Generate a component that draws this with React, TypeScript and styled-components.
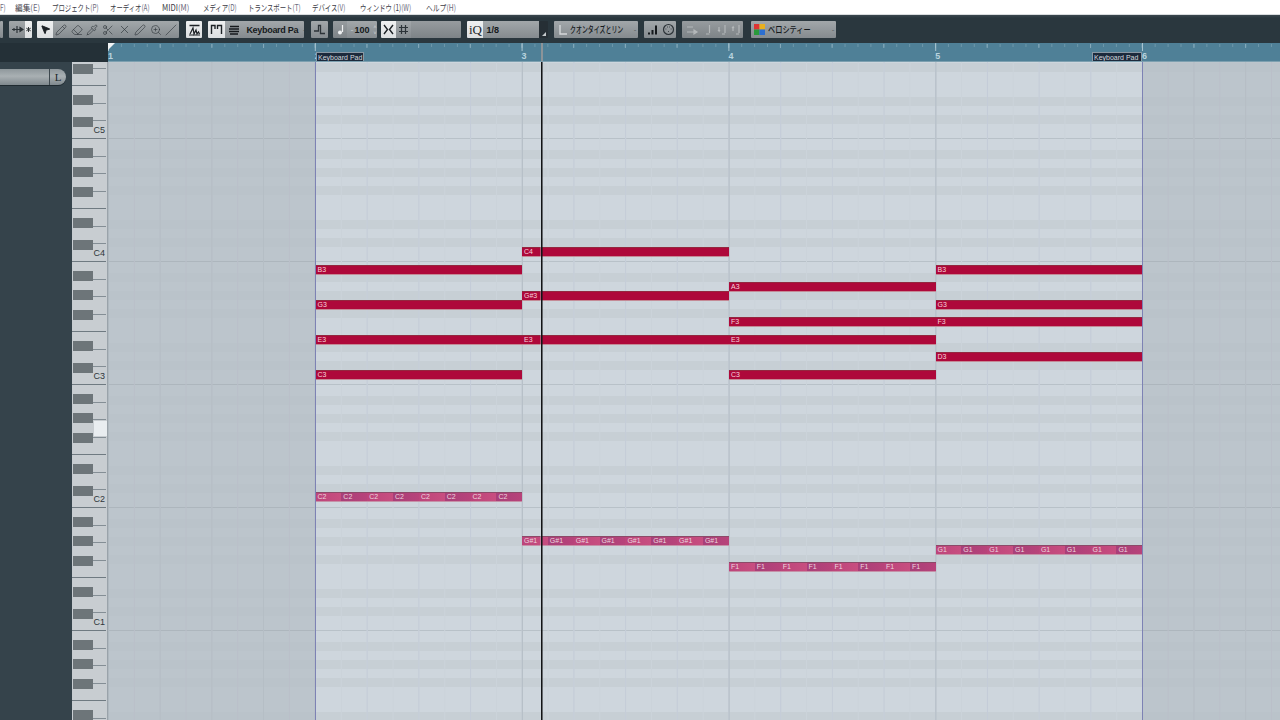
import styled, { createGlobalStyle, css } from "styled-components";
import { Eraser, Pipette, Pencil, Scissors, X, Slash, ZoomIn, Pen, MousePointer2 } from "lucide-react";

const BAR = 206.8;
const LANE_TOP = 62;
const OCTAVE = 123;

const GlobalStyle = createGlobalStyle`
  html, body {
    margin: 0;
    padding: 0;
    background: #35434b;
  }
  * {
    box-sizing: border-box;
  }
  svg {
    flex: none;
  }
`;

const Screen = styled.div`
  width: 1280px;
  height: 720px;
  overflow: hidden;
  display: flex;
  flex-direction: column;
  font-family: "Liberation Sans", Arial, sans-serif;
`;

const MenuBar = styled.div`
  height: 15px;
  flex: none;
  background: #fff;
  border-bottom: 1px solid #d9dcde;
  display: flex;
  gap: 10px;
  overflow: hidden;
  font-family: "Noto Sans CJK JP", "Liberation Sans", sans-serif;
  font-size: 8.5px;
  line-height: 14px;
  color: #3c3c46;
  white-space: nowrap;
`;

const MenuItem = styled.span<{ $w: number; $sx: number }>`
  flex: none;
  width: ${(p) => p.$w}px;
  transform: scaleX(${(p) => p.$sx});
  transform-origin: left center;
  b {
    font-weight: 400;
    color: #6c6a7c;
  }
`;

const Toolbar = styled.div`
  height: 28px;
  flex: none;
  background: linear-gradient(#3a474e, #2a373e 3px);
  display: flex;
  align-items: flex-start;
  padding-top: 6px;
`;

const Group = styled.div<{ $gap?: number }>`
  display: flex;
  height: 17px;
  flex: none;
  margin-right: ${(p) => p.$gap ?? 5}px;
  border-radius: 1px;
  overflow: hidden;
`;

const Seg = styled.div<{ $w: number; $on?: boolean; $off?: boolean }>`
  flex: none;
  width: ${(p) => p.$w}px;
  height: 17px;
  display: flex;
  align-items: center;
  justify-content: center;
  color: #2c3338;
  background: linear-gradient(#a2a7aa, #858b8f);
  ${(p) =>
    p.$on &&
    css`
      background: linear-gradient(#eff0f1, #dcdfe1);
      color: #1d2226;
    `}
  ${(p) =>
    p.$off &&
    css`
      background: linear-gradient(#979c9f, #7d8387);
      color: #b4b8ba;
    `}
`;

const SegText = styled.div<{ $w: number; $gap?: number }>`
  flex: none;
  width: ${(p) => p.$w}px;
  height: 17px;
  display: flex;
  align-items: center;
  gap: ${(p) => p.$gap ?? 3}px;
  padding-left: 3px;
  overflow: hidden;
  white-space: nowrap;
  color: #15191c;
  font-size: 9px;
  font-weight: 700;
  background: linear-gradient(#a2a7aa, #858b8f);
`;

const Jp = styled.span<{ $w: number; $sx: number }>`
  flex: none;
  width: ${(p) => p.$w}px;
  font-family: "Noto Sans CJK JP", sans-serif;
  font-size: 9px;
  font-weight: 500;
  transform: scaleX(${(p) => p.$sx});
  transform-origin: left center;
`;

const Narrow = styled.span`
  letter-spacing: -0.3px;
`;

const Drop = styled.span`
  margin-left: auto;
  margin-right: 2px;
  color: #555c60;
  font-size: 8px;
  font-weight: 400;
`;

const Spin = styled.span`
  margin-left: auto;
  margin-right: 1px;
  font-size: 5px;
  line-height: 6px;
  font-weight: 400;
  color: #d8dbdd;
  text-align: center;
`;

const Minus = styled.span`
  color: #c4c8ca;
  font-weight: 400;
  margin-right: -2px;
`;

const IqLogo = styled.span`
  font-family: "Liberation Serif", serif;
  font-size: 13px;
  font-weight: 400;
  color: #22272b;
`;

const Corner = styled.div`
  flex: none;
  width: 9px;
  height: 17px;
  background: #262f35;
  position: relative;
  &::after {
    content: "";
    position: absolute;
    right: 2px;
    bottom: 2px;
    border-left: 4px solid transparent;
    border-bottom: 4px solid #c4c9cc;
  }
`;

const Ruler = styled.div`
  height: 19px;
  flex: none;
  display: flex;
  background: #243037;
`;

const RulerCorner = styled.div`
  flex: none;
  width: 108px;
`;

const RulerTrack = styled.div`
  flex: 1;
  position: relative;
  display: flex;
  overflow: hidden;
  border-bottom: 1px solid #7da0b0;
  background-color: #4f8097;
  background-image: linear-gradient(90deg, #a9c5d1 1px, transparent 1px),
    linear-gradient(90deg, #86aabb 1px, transparent 1px),
    linear-gradient(90deg, #6d97aa 1px, transparent 1px);
  background-size: ${BAR}px 8px, ${BAR / 4}px 4px, ${BAR / 16}px 3px;
  background-position: 0 0, 0 1px, 0 1px;
  background-repeat: repeat-x;
`;

const StartFlag = styled.div`
  position: absolute;
  left: 0;
  top: 0;
  border-top: 7px solid #f1f4f5;
  border-right: 7px solid transparent;
`;

const BarCell = styled.div`
  flex: none;
  width: ${BAR}px;
  padding: 8px 0 0 0;
  font-size: 9px;
  line-height: 10px;
  font-weight: 700;
  color: #b9d3de;
`;

const PartTag = styled.div<{ $x: number; $w: number }>`
  position: absolute;
  left: ${(p) => p.$x}px;
  width: ${(p) => p.$w}px;
  top: 9px;
  height: 10px;
  padding-left: 1px;
  background: #1c2a3c;
  border: 1px solid #8a99a5;
  border-bottom: none;
  color: #d2d8dc;
  font-size: 7px;
  line-height: 9px;
  white-space: nowrap;
`;

const RulerHead = styled.div`
  position: absolute;
  left: 433px;
  top: 0;
  bottom: 0;
  width: 2px;
  background: #8c9499;
`;

const Body = styled.div`
  flex: 1;
  display: flex;
  min-height: 0;
`;

const LeftPanel = styled.div`
  flex: none;
  width: 72px;
  background: #35434b;
  padding-top: 7px;
`;

const Pill = styled.div`
  width: 66px;
  height: 16px;
  display: flex;
  border-radius: 0 8px 8px 0;
  overflow: hidden;
  background: linear-gradient(#8f989c, #a9b0b3 45%, #7f888d);
  box-shadow: 0 1px 0 #1f2a30;
`;

const PillBody = styled.div`
  flex: 1;
  border-right: 1px solid #3d484e;
`;

const PillTag = styled.div`
  flex: none;
  width: 16px;
  text-align: center;
  font-family: "Liberation Serif", serif;
  font-size: 11px;
  line-height: 16px;
  color: #20282c;
`;

const Keyboard = styled.div`
  flex: none;
  width: 36px;
  position: relative;
  overflow: hidden;
  background: #c8cdd1;
  border-right: 1px solid #9aa3aa;
`;

const BlackKey = styled.div<{ $y: number }>`
  position: absolute;
  left: 1px;
  top: ${(p) => p.$y}px;
  width: 20px;
  height: 10px;
  background: #6d7579;
`;

const KeyLine = styled.div<{ $y: number; $full: boolean }>`
  position: absolute;
  right: 1px;
  top: ${(p) => p.$y}px;
  width: ${(p) => (p.$full ? 34 : 14)}px;
  height: 1px;
  background: ${(p) => (p.$full ? "#6f7a81" : "#848e95")};
`;

const KeyLabel = styled.div<{ $y: number }>`
  position: absolute;
  right: 2px;
  top: ${(p) => p.$y}px;
  font-size: 9px;
  line-height: 10px;
  color: #30363a;
`;

const ActiveKey = styled.div`
  position: absolute;
  left: 22px;
  top: ${421 - LANE_TOP}px;
  width: 13px;
  height: 15px;
  background: #e9edf0;
`;

const laneBackground = (base: string, stripe: string, line: string, bar: string, quarter: string, eighth: string) => css`
  background-color: ${base};
  background-image: linear-gradient(90deg, ${bar} 1px, transparent 1px),
    linear-gradient(90deg, ${quarter} 1px, transparent 1px),
    linear-gradient(90deg, ${eighth} 1px, transparent 1px),
    linear-gradient(
      ${line} 0 1px,
      transparent 1px 12px,
      ${stripe} 12px 21px,
      transparent 21px 30px,
      ${stripe} 30px 39px,
      transparent 39px 48px,
      ${stripe} 48px 57px,
      transparent 57px 82px,
      ${stripe} 82px 91px,
      transparent 91px 100px,
      ${stripe} 100px 109px,
      transparent 109px
    );
  background-size: ${BAR}px 100%, ${BAR / 4}px 100%, ${BAR / 8}px 100%, 100% ${OCTAVE}px;
`;

const Lane = styled.div`
  flex: 1;
  position: relative;
  overflow: hidden;
  ${laneBackground("#bcc5cc", "#bac3ca", "#adb6bd", "#afb8bf", "#b5bec5", "#babfc9")}
  background-position: 0 0, 0 0, 0 0, 0 ${261 - LANE_TOP}px;
`;

const PartRegion = styled.div`
  position: absolute;
  left: 207px;
  top: 0;
  bottom: 0;
  width: 827.5px;
  border-left: 1px solid #7d82b4;
  border-right: 1px solid #7d82b4;
  ${laneBackground("#ced6dd", "#c7cfd5", "#b8c1c8", "#b3bcc4", "#c4ccd8", "#cbd3da")}
  background-position: -1px 0, -1px 0, -1px 0, 0 ${261 - LANE_TOP}px;
`;

const Note = styled.div<{ $x: number; $y: number; $w: number }>`
  position: absolute;
  left: ${(p) => p.$x - 108}px;
  top: ${(p) => p.$y - LANE_TOP}px;
  width: ${(p) => p.$w}px;
  height: 10px;
  padding-left: 2px;
  font-size: 7px;
  line-height: 7px;
  white-space: nowrap;
  color: #f6d3da;
  background: #ae083a;
  border-top: 1px solid #93283f;
  border-bottom: 1px solid #c48a96;
`;

const SoftNote = styled.div<{ $x: number; $y: number }>`
  position: absolute;
  left: ${(p) => p.$x - 108}px;
  top: ${(p) => p.$y - LANE_TOP}px;
  width: ${BAR}px;
  height: 10px;
  display: flex;
  border-top: 1px solid #8c4a68;
  border-bottom: 1px solid #c592a8;
`;

const SoftCell = styled.div<{ $odd: boolean }>`
  flex: none;
  width: ${BAR / 8}px;
  padding-left: 2px;
  font-size: 7px;
  line-height: 7px;
  color: #ecd6df;
  background: ${(p) => (p.$odd ? "linear-gradient(90deg, #a83f78, #b8437a)" : "linear-gradient(90deg, #bc447a, #c84e80)")};
`;

const Playhead = styled.div`
  position: absolute;
  left: 433px;
  top: 0;
  bottom: 0;
  width: 1px;
  background: #121416;
  box-shadow: 1px 0 0 rgba(18, 20, 22, 0.55), -1px 0 0 rgba(210, 215, 220, 0.35);
`;

const redNotes = [
  { n: "C4", x: 522, y: 247 },
  { n: "B3", x: 315.5, y: 265 },
  { n: "B3", x: 935.5, y: 265 },
  { n: "A3", x: 729, y: 282 },
  { n: "G#3", x: 522, y: 291 },
  { n: "G3", x: 315.5, y: 300 },
  { n: "G3", x: 935.5, y: 300 },
  { n: "F3", x: 729, y: 317 },
  { n: "F3", x: 935.5, y: 317 },
  { n: "E3", x: 315.5, y: 335 },
  { n: "E3", x: 522, y: 335 },
  { n: "E3", x: 729, y: 335 },
  { n: "D3", x: 935.5, y: 352 },
  { n: "C3", x: 315.5, y: 370 },
  { n: "C3", x: 729, y: 370 },
];

const softNotes = [
  { n: "C2", x: 315.5, y: 492 },
  { n: "G#1", x: 522, y: 536 },
  { n: "G1", x: 935.5, y: 545 },
  { n: "F1", x: 729, y: 562 },
];

// the first menu runs off the left edge of the picture, only its tail shows
const menus = [
  ["", "F)", 5, 0.75],
  ["編集", "(E)", 27, 0.9],
  ["プロジェクト", "(P)", 48, 0.75],
  ["オーディオ", "(A)", 42, 0.75],
  ["MIDI", "(M)", 31, 0.9],
  ["メディア", "(D)", 35, 0.75],
  ["トランスポート", "(T)", 54, 0.75],
  ["デバイス", "(V)", 38, 0.75],
  ["ウィンドウ (1)", "(W)", 56, 0.75],
  ["ヘルプ", "(H)", 33, 0.8],
] as const;

const octaves = [15, 138, 261, 384, 507, 630];
const labels: Record<number, string> = { 138: "C5", 261: "C4", 384: "C3", 507: "C2", 630: "C1" };
const blackOffsets = [10, 29, 49, 80, 102];
const lineOffsets = [0, 17.5, 35, 52.5, 70, 87.5, 105];

function Glyph({ children, w = 13, h = 13 }: { children: React.ReactNode; w?: number; h?: number }) {
  return (
    <svg width={w} height={h} viewBox={`0 0 ${w} ${h}`} fill="none" stroke="currentColor" strokeWidth="1.2">
      {children}
    </svg>
  );
}

function Piano() {
  return (
    <Keyboard>
      {octaves.map((base) => (
        <div key={base}>
          {lineOffsets.map((o) => (
            <KeyLine key={o} $y={Math.round(base + o - LANE_TOP)} $full={o === 0 || o === 70} />
          ))}
          {blackOffsets.map((o) => (
            <BlackKey key={o} $y={base + o - LANE_TOP} />
          ))}
          {labels[base] && <KeyLabel $y={base - LANE_TOP - 13}>{labels[base]}</KeyLabel>}
        </div>
      ))}
      <ActiveKey />
    </Keyboard>
  );
}

function App() {
  const tool = { size: 12, strokeWidth: 1.2 };
  return (
    <Screen>
      <GlobalStyle />
      <MenuBar>
        {menus.map(([label, key, w, sx]) => (
          <MenuItem key={key} $w={w} $sx={sx}>
            {label}
            <b>{key}</b>
          </MenuItem>
        ))}
      </MenuBar>

      <Toolbar>
        <Group $gap={6}>
          <Seg $w={3} />
        </Group>
        <Group>
          <Seg $w={16}>
            <Glyph>
              <path d="M1 6.5h11" />
              <path d="M6 3v7M3 5v3M9 4.5l3 2-3 2z" fill="currentColor" />
            </Glyph>
          </Seg>
          <Seg $w={7} $on>
            <Glyph w={5} h={5}>
              <path d="M2.5 0v5M.3 1.2l4.4 2.6M4.7 1.2L.3 3.8" strokeWidth="0.9" />
            </Glyph>
          </Seg>
        </Group>
        <Group $gap={7}>
          <Seg $w={16} $on>
            <MousePointer2 size={11} fill="currentColor" />
          </Seg>
          <Seg $w={15.8}>
            <Pencil {...tool} />
          </Seg>
          <Seg $w={15.8}>
            <Eraser {...tool} />
          </Seg>
          <Seg $w={15.8}>
            <Pipette {...tool} />
          </Seg>
          <Seg $w={15.8}>
            <Scissors {...tool} />
          </Seg>
          <Seg $w={15.8}>
            <X size={13} strokeWidth={1.2} />
          </Seg>
          <Seg $w={15.8}>
            <Pen {...tool} />
          </Seg>
          <Seg $w={15.8}>
            <ZoomIn {...tool} />
          </Seg>
          <Seg $w={15.8}>
            <Slash {...tool} />
          </Seg>
        </Group>
        <Group $gap={6}>
          <Seg $w={16} $on>
            <Glyph>
              <path d="M1.5 2.5h10" strokeWidth="1.5" />
              <path d="M2 11l3-6 1 6 2-4 1 4 1.5-2 1 2" />
              <path d="M1 12h11" />
            </Glyph>
          </Seg>
        </Group>
        <Group $gap={7}>
          <Seg $w={17} $on>
            <Glyph>
              <path d="M1.5 11V2.5H5V6M7.5 6V2.5h4V11" strokeWidth="1.4" />
            </Glyph>
          </Seg>
          <SegText $w={79} $gap={5}>
            <Glyph>
              <path d="M2 3.5h9M1 6h10M1 8.5h10M2 11h8" strokeWidth="1.3" />
            </Glyph>
            <Narrow>Keyboard Pa</Narrow>
            <Drop>-</Drop>
          </SegText>
        </Group>
        <Group>
          <Seg $w={17}>
            <Glyph>
              <path d="M1 8h4.5V2.5h2v8H12" strokeWidth="1.3" />
            </Glyph>
          </Seg>
        </Group>
        <Group $gap={4}>
          <Seg $w={14} $off>
            <Glyph>
              <path d="M8.5 2v7" stroke="#eef0f1" />
              <circle cx="6" cy="9.5" r="2" fill="#eef0f1" stroke="none" />
            </Glyph>
          </Seg>
          <SegText $w={30}>
            <Minus>-</Minus>
            <span>100</span>
            <Spin>
              ˄
              <br />˅
            </Spin>
          </SegText>
        </Group>
        <Group $gap={6}>
          <Seg $w={15} $on>
            <Glyph>
              <path d="M2 2l3.5 4.5L2 11M11 2L7.5 6.5 11 11" strokeWidth="1.4" />
            </Glyph>
          </Seg>
          <Seg $w={15}>
            <Glyph>
              <path d="M4.5 2v9M8.5 2v9M2 4.5h9M2 8.5h9" />
            </Glyph>
          </Seg>
          <Seg $w={50} $off />
        </Group>
        <Group $gap={6}>
          <Seg $w={16} $on>
            <IqLogo>iQ</IqLogo>
          </Seg>
          <SegText $w={56}>
            <span>1/8</span>
          </SegText>
          <Corner />
        </Group>
        <Group $gap={6}>
          <SegText $w={84} $gap={0}>
            <Glyph>
              <path d="M3 2v9h7" stroke="#d5d8da" strokeWidth="1.4" />
            </Glyph>
            <Jp $w={54} $sx={0.66}>
              クオンタイズとリン
            </Jp>
            <Drop>-</Drop>
          </SegText>
        </Group>
        <Group $gap={6}>
          <Seg $w={16}>
            <Glyph>
              <path d="M2 9.5h2v2H2zM5.5 7h2v4.5h-2zM9 2.5h2v9H9z" fill="#15191c" stroke="none" />
            </Glyph>
          </Seg>
          <Seg $w={16}>
            <Glyph>
              <circle cx="6.5" cy="6.5" r="5" />
              <path d="M3.5 6h.8M5 4h.8M7.2 4H8M8.7 6h.8M6.2 8.5h.8" />
            </Glyph>
          </Seg>
        </Group>
        <Group $gap={8}>
          <Seg $w={20} $off>
            <Glyph>
              <path d="M1 4h6M1 9h9M8 7l3 2-3 2z" />
            </Glyph>
          </Seg>
          <Seg $w={13} $off>
            <Glyph>
              <path d="M7.5 2v8M4 11h3.5" />
            </Glyph>
          </Seg>
          <Seg $w={14} $off>
            <Glyph>
              <path d="M3 4v4l-1-1M3 8l1-1M9 2v8M6 11h3" />
            </Glyph>
          </Seg>
          <Seg $w={14} $off>
            <Glyph>
              <path d="M3 8V4L2 5M3 4l1 1M9 2v8M6 11h3" />
            </Glyph>
          </Seg>
        </Group>
        <Group>
          <SegText $w={85}>
            <svg width="11" height="11" viewBox="0 0 10 10">
              <rect width="5" height="5" fill="#d33" />
              <rect x="5" width="5" height="5" fill="#e8b020" />
              <rect y="5" width="5" height="5" fill="#2a9a3c" />
              <rect x="5" y="5" width="5" height="5" fill="#2c6fd0" />
            </svg>
            <Jp $w={42} $sx={0.8}>
              ベロシティー
            </Jp>
            <Drop>-</Drop>
          </SegText>
        </Group>
      </Toolbar>

      <Ruler>
        <RulerCorner />
        <RulerTrack>
          <StartFlag />
          {[1, 2, 3, 4, 5, 6].map((n) => (
            <BarCell key={n}>{n}</BarCell>
          ))}
          <PartTag $x={208} $w={48}>
            Keyboard Pad
          </PartTag>
          <PartTag $x={984} $w={50}>
            Keyboard Pad
          </PartTag>
          <RulerHead />
        </RulerTrack>
      </Ruler>

      <Body>
        <LeftPanel>
          <Pill>
            <PillBody />
            <PillTag>L</PillTag>
          </Pill>
        </LeftPanel>
        <Piano />
        <Lane>
          <PartRegion />
          {redNotes.map((note) => (
            <Note key={`${note.n}-${note.x}`} $x={note.x} $y={note.y} $w={BAR}>
              {note.n}
            </Note>
          ))}
          {softNotes.map((note) => (
            <SoftNote key={note.n} $x={note.x} $y={note.y}>
              {Array.from({ length: 8 }, (_, i) => (
                <SoftCell key={i} $odd={i % 2 === 1}>
                  {note.n}
                </SoftCell>
              ))}
            </SoftNote>
          ))}
          <Playhead />
        </Lane>
      </Body>
    </Screen>
  );
}

export default App;
